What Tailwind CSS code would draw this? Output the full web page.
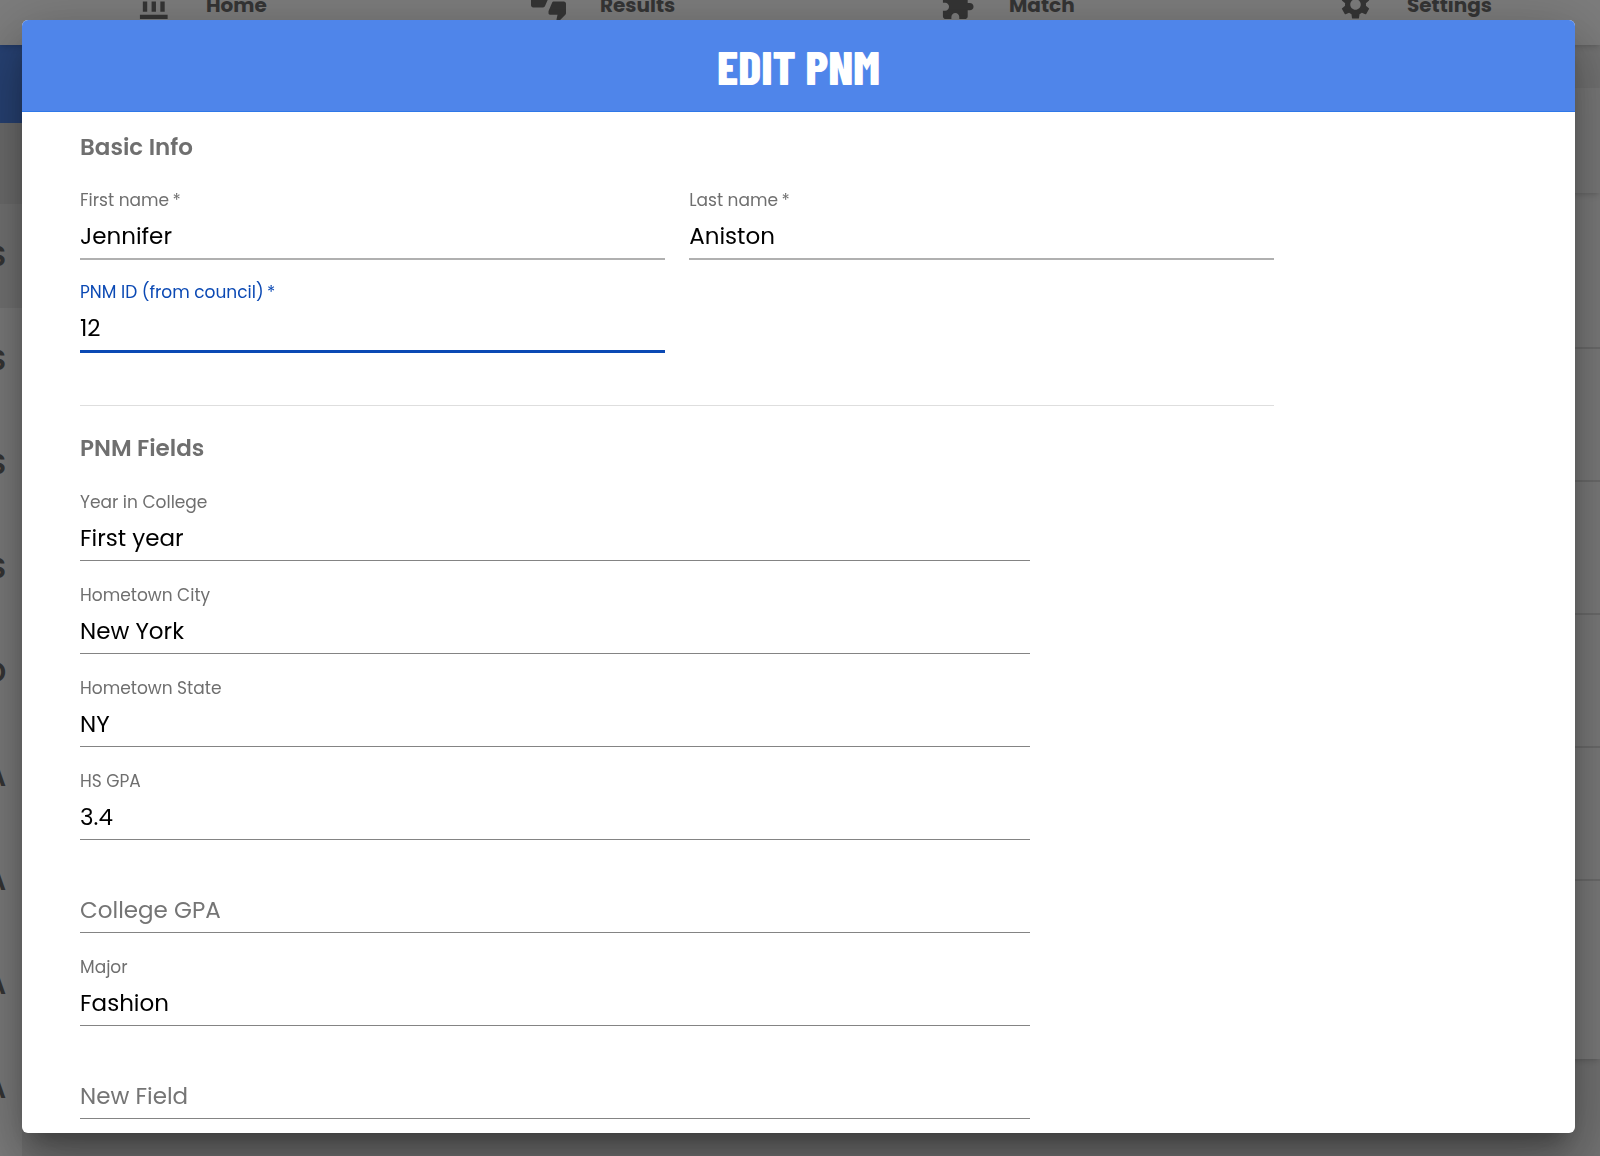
<!DOCTYPE html>
<html lang="en">
<head>
    <meta charset="UTF-8">
    <meta name="viewport" content="width=device-width, initial-scale=1.0">
    <title>Edit PNM</title>
    <script src="https://cdn.jsdelivr.net/npm/@tailwindcss/browser@4"></script>
</head>
<body class="bg-[#e9e9e9] font-['Poppins','Inter',sans-serif] h-screen overflow-hidden flex flex-col">
    <!-- Page behind the dialog -->
    <nav class="relative z-10 h-[45px] shrink-0 bg-[#fafafa] shadow-md flex text-[#6b6b6b] text-[20px] leading-7 font-bold">
        <a href="#" class="-mt-[9px] pl-[137px] w-[531px] flex items-start gap-[34px]">
            <svg class="-mt-1 w-[35px] h-[35px]" viewBox="0 0 24 24" fill="currentColor"><path d="M4 10v7h3v-7H4zm6 0v7h3v-7h-3zM2 22h19v-3H2v3zm14-12v7h3v-7h-3zm-4.500-9L2 6v2h19V6l-9.500-5z"/></svg>
            Home
        </a>
        <a href="#" class="-mt-[9px] w-[409px] flex items-start gap-[34px]">
            <svg class="-mt-1 w-[35px] h-[35px]" viewBox="0 0 24 24" fill="currentColor"><path d="M12 6c0-.55-.45-1-1-1H5.820l.66-3.180.020-.230c0-.310-.130-.590-.330-.800L5.380 0 .440 4.940C.170 5.210 0 5.590 0 6v6.500c0 .830.670 1.500 1.500 1.500h6.750c.620 0 1.150-.380 1.380-.910l2.260-5.290c.070-.170.110-.360.110-.550V6zm10.500 4h-6.750c-.620 0-1.150.380-1.380.910l-2.260 5.290c-.070.170-.110.360-.110.550V18c0 .550.450 1 1 1h5.180l-.660 3.180-.020.240c0 .310.130.590.330.800l.790.780 4.940-4.940c.270-.270.440-.650.440-1.060v-6.500c0-.830-.670-1.500-1.500-1.500z"/></svg>
            Results
        </a>
        <a href="#" class="-mt-[9px] w-[398px] flex items-start gap-[34px]">
            <svg class="-mt-1 w-[35px] h-[35px]" viewBox="0 0 24 24" fill="currentColor"><path d="M20.500 11H19V7c0-1.100-.9-2-2-2h-4V3.500C13 2.120 11.880 1 10.500 1S8 2.120 8 3.500V5H4c-1.100 0-1.990.9-1.990 2v3.800H3.500c1.490 0 2.700 1.210 2.700 2.700s-1.210 2.700-2.700 2.700H2V20c0 1.100.9 2 2 2h3.800v-1.500c0-1.490 1.210-2.700 2.700-2.700 1.490 0 2.700 1.210 2.700 2.700V22H17c1.100 0 2-.9 2-2v-4h1.500c1.380 0 2.500-1.120 2.500-2.500S21.880 11 20.500 11z"/></svg>
            Match
        </a>
        <a href="#" class="-mt-[9px] flex items-start gap-[34px]">
            <svg class="-mt-1 w-[35px] h-[35px]" viewBox="0 0 24 24" fill="currentColor"><path d="M19.140 12.940c.040-.3.060-.61.060-.94 0-.32-.020-.64-.070-.94l2.030-1.580c.180-.14.230-.41.120-.61l-1.920-3.320c-.120-.22-.370-.29-.59-.22l-2.390.96c-.5-.38-1.030-.7-1.620-.94L14.400 2.810c-.040-.24-.240-.41-.480-.41h-3.840c-.240 0-.430.170-.470.410L9.250 5.350c-.59.240-1.130.570-1.620.94l-2.390-.96c-.220-.08-.470 0-.590.220L2.740 8.870c-.120.210-.080.470.120.610l2.030 1.580c-.050.3-.090.630-.090.94s.020.640.070.940l-2.030 1.580c-.180.140-.230.410-.120.610l1.920 3.320c.120.220.370.290.590.220l2.390-.96c.5.380 1.030.7 1.620.94l.360 2.540c.050.240.240.410.480.410h3.840c.240 0 .440-.170.470-.410l.360-2.540c.590-.240 1.130-.560 1.620-.94l2.390.96c.220.080.470 0 .590-.220l1.920-3.320c.120-.220.070-.470-.120-.610l-2.010-1.580zM12 15.600c-1.980 0-3.600-1.620-3.600-3.600s1.620-3.600 3.600-3.600 3.600 1.620 3.600 3.600-1.620 3.600-3.600 3.600z"/></svg>
            Settings
        </a>
    </nav>
    <div class="flex-1 flex justify-between">
        <aside class="w-[22px] bg-[#fafafa] text-[#6b6b6b] text-[28px] font-semibold">
            <div class="h-[78px] bg-[#4f85ea]"></div>
            <div class="h-[81px] bg-[#dcdcdc]"></div>
            <ul>
                <li class="h-[104px] pt-0.5 bg-[#e9e9e9] flex items-center justify-end pr-4">S</li>
                <li class="h-[104px] pt-0.5 flex items-center justify-end pr-4">S</li>
                <li class="h-[104px] pt-0.5 flex items-center justify-end pr-4">S</li>
                <li class="h-[104px] pt-0.5 flex items-center justify-end pr-4">S</li>
                <li class="h-[104px] pt-0.5 flex items-center justify-end pr-4">D</li>
                <li class="h-[104px] pt-0.5 flex items-center justify-end pr-4">A</li>
                <li class="h-[104px] pt-0.5 flex items-center justify-end pr-4">A</li>
                <li class="h-[104px] pt-0.5 flex items-center justify-end pr-4">A</li>
                <li class="h-[104px] pt-0.5 flex items-center justify-end pr-4">A</li>
            </ul>
        </aside>
        <section class="w-[60px] pt-[43px]">
            <div class="relative h-[105px] bg-[#f5f5f5] shadow-md"></div>
            <div class="bg-[#fafafa] shadow-md">
                <div class="h-[156px] border-b-2 border-[#dcdcdc]"></div>
                <div class="h-[133px] border-b-2 border-[#dcdcdc]"></div>
                <div class="h-[133px] border-b-2 border-[#dcdcdc]"></div>
                <div class="h-[133px] border-b-2 border-[#dcdcdc]"></div>
                <div class="h-[133px] border-b-2 border-[#dcdcdc]"></div>
                <div class="h-[178px]"></div>
            </div>
        </section>
    </div>

    <!-- Dialog -->
    <div class="fixed inset-0 z-20 bg-black/50 pt-5 pb-[23px] pl-[22px] pr-[25px]">
        <div role="dialog" aria-labelledby="dialog-title" class="h-full flex flex-col rounded-md overflow-hidden bg-white shadow-[0_16px_22px_-10px_rgba(0,0,0,0.3),0_35px_55px_4px_rgba(0,0,0,0.2),0_13px_67px_12px_rgba(0,0,0,0.18)]">
            <h1 id="dialog-title" class="h-[92px] shrink-0 flex items-center justify-center bg-[#4f85ea] border-b border-[#2f78e8] text-white text-[48px] font-extrabold font-['Barlow_Condensed','Roboto_Condensed','Liberation_Sans_Narrow',sans-serif]">EDIT PNM</h1>
            <form class="flex-1 overflow-hidden pl-[58px] pr-14 pt-[17px] text-[#6f6f6f]">
                <section class="w-[83%] pb-[52px] border-b border-[#dedede]">
                    <h2 class="text-[23px] leading-9 font-semibold">Basic Info</h2>
                    <div class="mt-0.5 grid grid-cols-2 gap-x-6">
                        <div class="h-[93px] flex flex-col justify-end border-b-2 border-[#b0b0b0]">
                            <label for="first-name" class="text-[17px] leading-6">First name&thinsp;*</label>
                            <input id="first-name" type="text" value="Jennifer" class="h-[46px] pt-0.5 text-[23px] text-black outline-none">
                        </div>
                        <div class="h-[93px] flex flex-col justify-end border-b-2 border-[#b0b0b0]">
                            <label for="last-name" class="text-[17px] leading-6">Last name&thinsp;*</label>
                            <input id="last-name" type="text" value="Aniston" class="h-[46px] pt-0.5 text-[23px] text-black outline-none">
                        </div>
                        <div class="h-[93px] flex flex-col justify-end border-b-3 border-[#0b49b4]">
                            <label for="pnm-id" class="text-[17px] leading-6 text-[#0b49b4]">PNM ID (from council)&thinsp;*</label>
                            <input id="pnm-id" type="text" value="12" class="h-[46px] pt-0.5 text-[23px] text-black outline-none">
                        </div>
                    </div>
                </section>
                <section class="w-[66%] pt-6">
                    <h2 class="text-[23px] leading-9 font-semibold">PNM Fields</h2>
                    <div class="mt-0.5">
                        <div class="h-[93px] flex flex-col justify-end border-b border-[#848484]">
                            <label for="year" class="text-[17px] leading-6">Year in College</label>
                            <input id="year" type="text" value="First year" class="h-[46px] pt-0.5 text-[23px] text-black outline-none">
                        </div>
                        <div class="h-[93px] flex flex-col justify-end border-b border-[#848484]">
                            <label for="city" class="text-[17px] leading-6">Hometown City</label>
                            <input id="city" type="text" value="New York" class="h-[46px] pt-0.5 text-[23px] text-black outline-none">
                        </div>
                        <div class="h-[93px] flex flex-col justify-end border-b border-[#848484]">
                            <label for="state" class="text-[17px] leading-6">Hometown State</label>
                            <input id="state" type="text" value="NY" class="h-[46px] pt-0.5 text-[23px] text-black outline-none">
                        </div>
                        <div class="h-[93px] flex flex-col justify-end border-b border-[#848484]">
                            <label for="hs-gpa" class="text-[17px] leading-6">HS GPA</label>
                            <input id="hs-gpa" type="text" value="3.4" class="h-[46px] pt-0.5 text-[23px] text-black outline-none">
                        </div>
                        <div class="h-[93px] flex flex-col justify-end border-b border-[#848484]">
                            <input id="college-gpa" type="text" aria-label="College GPA" placeholder="College GPA" class="h-[46px] pt-0.5 text-[23px] text-black placeholder:text-[#757575] outline-none">
                        </div>
                        <div class="h-[93px] flex flex-col justify-end border-b border-[#848484]">
                            <label for="major" class="text-[17px] leading-6">Major</label>
                            <input id="major" type="text" value="Fashion" class="h-[46px] pt-0.5 text-[23px] text-black outline-none">
                        </div>
                        <div class="h-[93px] flex flex-col justify-end border-b border-[#848484]">
                            <input id="new-field" type="text" aria-label="New Field" placeholder="New Field" class="h-[46px] pt-0.5 text-[23px] text-black placeholder:text-[#757575] outline-none">
                        </div>
                    </div>
                </section>
            </form>
        </div>
    </div>
</body>
</html>
